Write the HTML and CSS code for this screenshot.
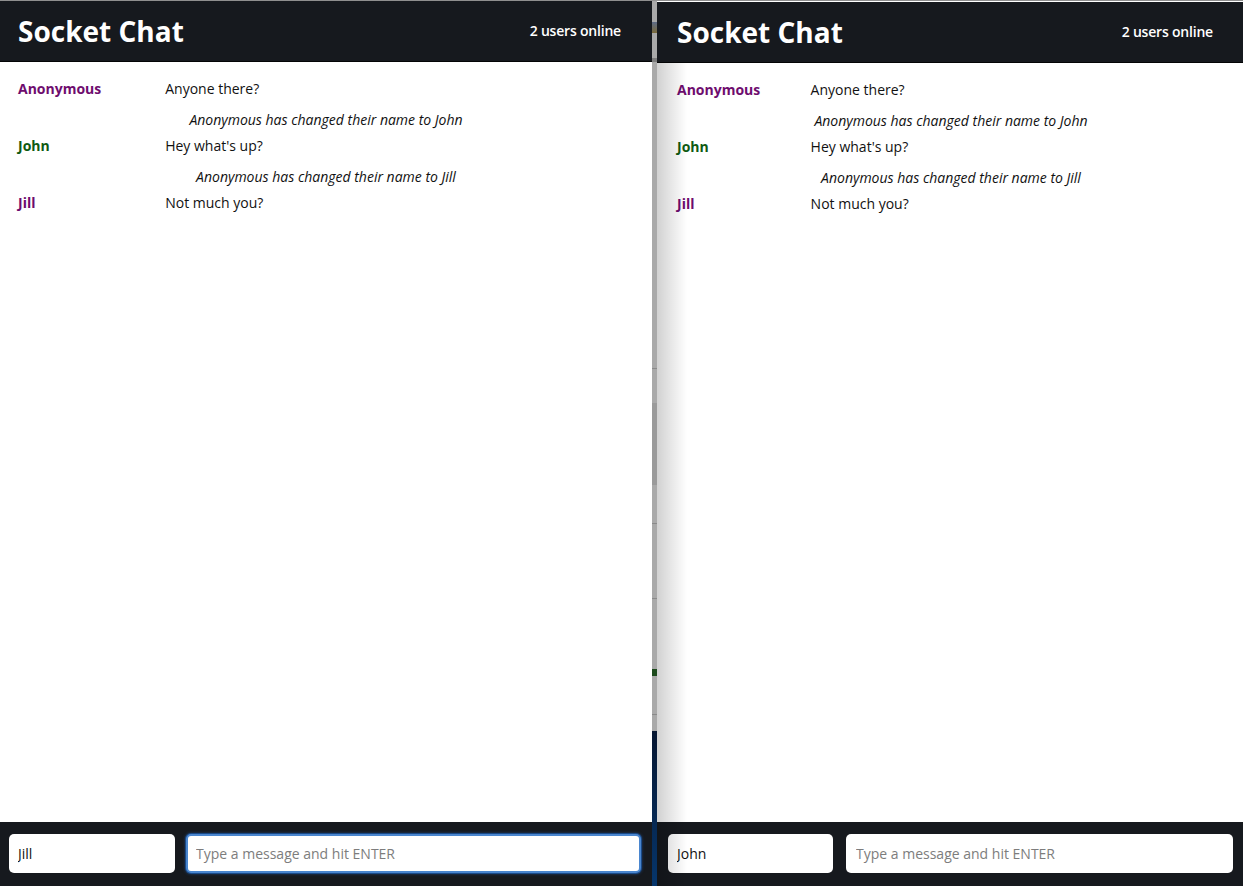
FILE: index.html
```html
<!DOCTYPE html>
<html lang="en">
<head>
<meta charset="utf-8">
<title>Socket Chat</title>
<link rel="stylesheet" href="styles.css">
</head>
<body>
<div class="desk">
  <section class="win win-left">
    <header class="top">
      <h1 class="title">Socket Chat</h1>
      <span class="online">2 users online</span>
    </header>
    <main class="log">
      <div class="msg"><span class="who who-purple">Anonymous</span><span class="text">Anyone there?</span></div>
      <div class="note">Anonymous has changed their name to John</div>
      <div class="msg"><span class="who who-green">John</span><span class="text">Hey what's up?</span></div>
      <div class="note">Anonymous has changed their name to Jill</div>
      <div class="msg"><span class="who who-purple">Jill</span><span class="text">Not much you?</span></div>
    </main>
    <footer class="bar">
      <input class="name" type="text" value="Jill">
      <input class="entry entry-focus" type="text" placeholder="Type a message and hit ENTER">
    </footer>
  </section>
  <div class="divider"></div>
  <section class="win win-right">
    <header class="top">
      <h1 class="title">Socket Chat</h1>
      <span class="online">2 users online</span>
    </header>
    <main class="log">
      <div class="msg"><span class="who who-purple">Anonymous</span><span class="text">Anyone there?</span></div>
      <div class="note">Anonymous has changed their name to John</div>
      <div class="msg"><span class="who who-green">John</span><span class="text">Hey what's up?</span></div>
      <div class="note">Anonymous has changed their name to Jill</div>
      <div class="msg"><span class="who who-purple">Jill</span><span class="text">Not much you?</span></div>
    </main>
    <footer class="bar">
      <input class="name" type="text" value="John">
      <input class="entry" type="text" placeholder="Type a message and hit ENTER">
    </footer>
  </section>
</div>
</body>
</html>
```

FILE: styles.css
```css
* {
  box-sizing: border-box;
}

html, body {
  margin: 0;
  padding: 0;
  height: 100%;
  background: #ffffff;
}

body {
  font-family: "Open Sans", "Liberation Sans", sans-serif;
  color: #111111;
  border-top: 1px solid #8f8f8f;
}

.desk {
  display: flex;
  height: 885px;
  overflow: hidden;
}

.win {
  display: flex;
  flex-direction: column;
  background: #ffffff;
  --pl: 18px;
  --gap: 11px;
}

.win-left {
  width: 652px;
  flex: 0 0 652px;
}

.win-right {
  flex: 1 1 auto;
  position: relative;
  --pl: 20px;
  --gap: 13px;
  padding-top: 1px;
}

.win-right::before {
  content: "";
  position: absolute;
  left: 0;
  top: 62px;
  bottom: 0;
  width: 30px;
  background: linear-gradient(to right, rgba(0, 0, 0, 0.18), rgba(0, 0, 0, 0));
  pointer-events: none;
  z-index: 2;
}

.divider {
  flex: 0 0 5px;
  background: linear-gradient(to bottom,
    #a9a9a9 0, #a9a9a9 21px,
    #5d6b86 21px, #7a6a3a 32px,
    #a9a9a9 32px, #a9a9a9 57px,
    #7d7d7d 57px, #7d7d7d 61px,
    #a9a9a9 61px, #a9a9a9 367px,
    #8a8a8a 367px, #8a8a8a 368px,
    #a9a9a9 368px, #a9a9a9 402px,
    #9a9a9a 402px, #9a9a9a 484px,
    #a9a9a9 484px, #a9a9a9 522px,
    #8a8a8a 522px, #8a8a8a 523px,
    #a9a9a9 523px, #a9a9a9 597px,
    #8a8a8a 597px, #8a8a8a 598px,
    #a9a9a9 598px, #a9a9a9 668px,
    #1c4a1c 668px, #1c4a1c 675px,
    #a9a9a9 675px, #a9a9a9 713px,
    #8a8a8a 713px, #8a8a8a 714px,
    #a9a9a9 714px, #a9a9a9 730px,
    #061631 730px, #06366c 100%);
}

.top {
  flex: 0 0 61px;
  display: flex;
  align-items: center;
  justify-content: space-between;
  background: #16191e;
  border-bottom: 1px solid #040506;
  padding: 0 31px 0 var(--pl);
  color: #ffffff;
}

.win-right .top {
  padding-right: 30px;
}

.title {
  margin: 0;
  font-size: 28px;
  line-height: 1;
  font-weight: 700;
  color: #ffffff;
}

.online {
  font-size: 14px;
  font-weight: 600;
  letter-spacing: -0.2px;
  color: #ffffff;
  margin-top: -1px;
}

.log {
  flex: 1 1 auto;
  padding: 17px 18px 0 var(--pl);
  font-size: 14px;
}

.msg {
  display: flex;
  line-height: 20px;
  height: 20px;
}

.who {
  flex: 0 0 20%;
  margin-right: 24px;
  font-weight: 700;
}

.who-purple {
  color: #6e0c6e;
}

.who-green {
  color: #0f5a12;
}

.text {
  color: #111111;
}

.note {
  line-height: 20px;
  height: 20px;
  margin: 11px 0 6px;
  text-align: center;
  font-style: italic;
  color: #111111;
}

.bar {
  flex: 0 0 64px;
  display: flex;
  gap: var(--gap);
  padding: 12px 11px 13px calc(var(--pl) - 9px);
  background: #16191e;
}

.win-right .bar {
  padding-right: 10px;
}

.name,
.entry {
  height: 39px;
  border: none;
  border-radius: 5px;
  background: #ffffff;
  font-family: "Open Sans", "Liberation Sans", sans-serif;
  font-size: 14px;
  color: #111111;
  padding: 0 9px;
  outline: none;
}

.name {
  flex: 0 0 166px;
  width: 166px;
}

.win-right .name {
  flex-basis: 165px;
  width: 165px;
}

.entry {
  flex: 1 1 auto;
  min-width: 0;
  padding-left: 10px;
}

.entry::placeholder {
  color: #7d7d7d;
}

.entry-focus {
  border: 2px solid #4a86cf;
  padding-left: 8px;
  box-shadow: 0 0 0 1px #1a4a88, 0 0 3px 1px rgba(40, 90, 160, 0.6);
}
```
